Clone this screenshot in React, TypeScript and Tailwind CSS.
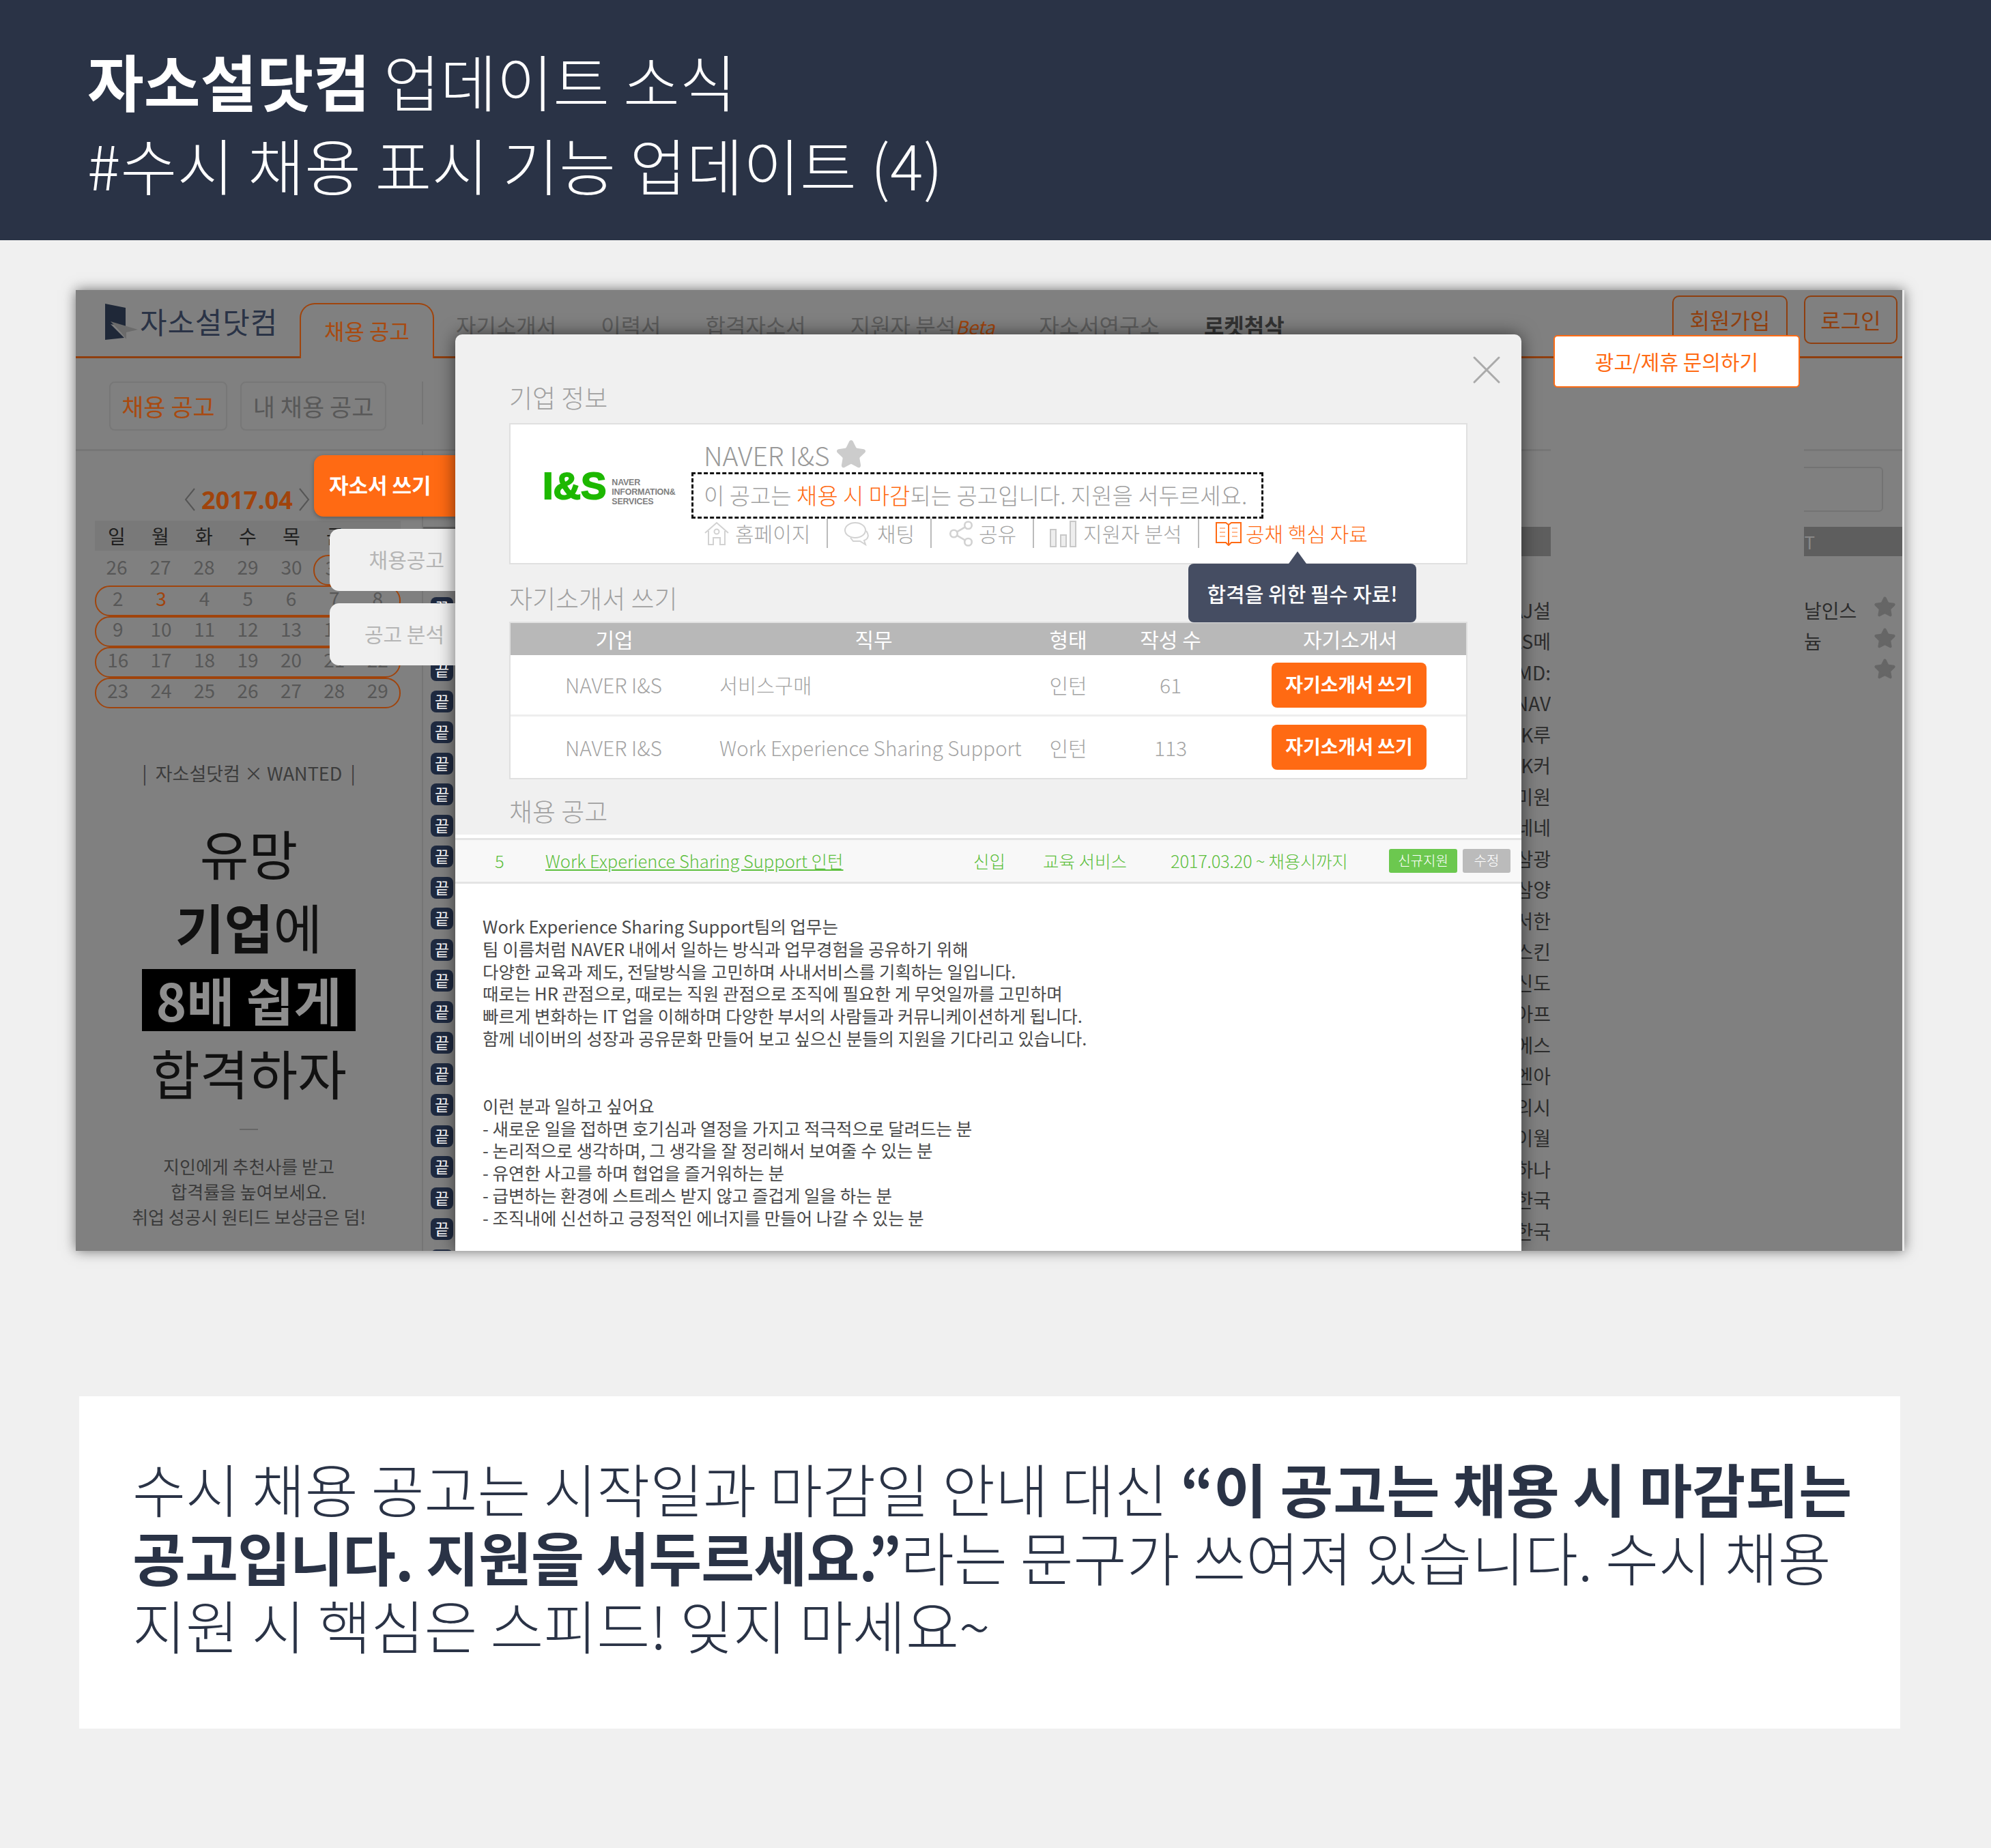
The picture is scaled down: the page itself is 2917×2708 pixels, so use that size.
import { Share2, Star, X } from 'lucide-react'

const weeks = [
  ['2', '3', '4', '5', '6', '7', '8'],
  ['9', '10', '11', '12', '13', '14', '15'],
  ['16', '17', '18', '19', '20', '21', '22'],
  ['23', '24', '25', '26', '27', '28', '29'],
]

const clipped = ['AJ설', 'LS메', 'MD:', 'NAV', 'SK루', 'SK커', '미원', '네네', '삼광', '삼양', '서한', '스킨', '신도', '아프', '에스', '엔아', '의시', '이월', '하나', '한국', '한국', '']

function Logo() {
  return (
    <svg width="50" height="56" viewBox="0 0 50 56">
      <path d="M0 0 L30 6 V34 L8 30 L28 50 L0 53 Z" fill="#1f2838" />
      <path d="M8 26 L48 38 L31 42 L31 52 L24 43 Z" fill="#6b6b6b" />
    </svg>
  )
}

function HomeIcon() {
  return (
    <svg width="38" height="36" viewBox="0 0 38 36" fill="none" stroke="#d2d2d2" strokeWidth="2">
      <path d="M2 17 L19 2 L36 17" />
      <path d="M7 14 V34 H14 V24 H24 V34 H31 V14" />
      <circle cx="19" cy="15" r="3.5" />
    </svg>
  )
}

function ChatIcon() {
  return (
    <svg width="40" height="36" viewBox="0 0 40 36" fill="none" stroke="#d2d2d2" strokeWidth="2">
      <ellipse cx="17" cy="13" rx="15" ry="11" />
      <path d="M33 14 C38 20 36 26 30 28 L32 34 L24 29 L14 29 L10 24" />
    </svg>
  )
}

function BarsIcon() {
  return (
    <svg width="40" height="40" viewBox="0 0 40 40" fill="#eeeeee" stroke="#c8c8c8" strokeWidth="2">
      <rect x="1" y="14" width="8" height="25" />
      <rect x="16" y="22" width="8" height="17" />
      <rect x="30" y="2" width="8" height="37" />
    </svg>
  )
}

function BookIcon() {
  return (
    <svg width="38" height="36" viewBox="0 0 38 36" fill="none" stroke="#ff6a13" strokeWidth="2">
      <path d="M1 2 H15 L19 5 L23 2 H37 V31 H23 L19 35 L15 31 H1 Z" />
      <path d="M19 5 V35" />
      <path d="M6 10 H14 M6 16 H14 M6 22 H14 M24 10 H32 M24 16 H32 M24 22 H32" strokeWidth="1.5" stroke="#ffa470" />
    </svg>
  )
}

function Calendar() {
  return (
    <div className="w-[448px] ml-[28px] text-[28px] text-[#575757] leading-[45px]">
      <div className="h-[102px] flex items-center justify-center gap-[9px] pt-[40px] pr-[2px]">
        <svg width="16" height="34" viewBox="0 0 16 34" fill="none" stroke="#555555" strokeWidth="2"><path d="M15 1 L2 17 L15 33" /></svg>
        <span className="text-[36px] font-bold text-[#a0440c] [font-family:'Open_Sans',sans-serif]">2017.04</span>
        <svg width="16" height="34" viewBox="0 0 16 34" fill="none" stroke="#555555" strokeWidth="2"><path d="M1 1 L14 17 L1 33" /></svg>
      </div>
      <div className="grid grid-cols-7 h-[44px] bg-[#797979] text-[#1f1f1f] text-center items-center leading-[44px]">
        {['일', '월', '화', '수', '목', '금', '토'].map((d) => (
          <span key={d}>{d}</span>
        ))}
      </div>
      <div className="grid grid-cols-7 h-[51px] items-end text-center">
        {['26', '27', '28', '29', '30'].map((d) => (
          <span key={d} className="pb-[5px]">{d}</span>
        ))}
        <div className="col-span-2 grid grid-cols-2 h-[45px] border-2 border-[#a0440c] rounded-[22px] leading-[33px]">
          <span>31</span>
          <span>1</span>
        </div>
      </div>
      {weeks.map((w) => (
        <div key={w[0]} className="grid grid-cols-7 h-[45px] text-center border-2 border-[#a0440c] rounded-[22px] leading-[33px]">
          {w.map((d) => (
            <span key={d} className={d === '3' ? 'text-[#a0440c]' : ''}>{d}</span>
          ))}
        </div>
      ))}
    </div>
  )
}

function Promo() {
  return (
    <div className="flex flex-col items-center w-[507px] text-[#111111] mt-[76px]">
      <div className="text-[27px] leading-[38px] text-[#3c3c3c] whitespace-pre">|  자소설닷컴 × WANTED  |</div>
      <div className="text-[78px] leading-[108px] mt-[43px]">유망</div>
      <div className="text-[78px] leading-[108px]"><b>기업</b>에</div>
      <div className="w-[313px] h-[91px] bg-black text-[#8e8e8e] text-[76px] font-bold leading-[88px] text-center mt-[9px] shrink-0">8배 쉽게</div>
      <div className="text-[78px] leading-[108px] mt-[6px]">합격하자</div>
      <div className="w-[27px] h-[2px] bg-[#666666] mt-[29px] shrink-0" />
      <div className="text-[26px] leading-[37px] text-[#3a3a3a] text-center mt-[34px]">
        지인에게 추천사를 받고<br />합격률을 높여보세요.<br />취업 성공시 원티드 보상금은 덤!
      </div>
    </div>
  )
}

function ListPane() {
  return (
    <div className="flex-1 min-w-0 flex flex-col border-l-2 border-[#757575]">
      <div className="h-[111px] shrink-0 flex justify-end items-center pr-[28px]">
        <div className="w-[360px] h-[66px] border-2 border-[#737373] rounded-[6px]" />
      </div>
      <div className="h-[43px] shrink-0 bg-[#5e5e5e] flex justify-end items-center pr-[128px] text-[26px] text-[#888888]">T</div>
      <div className="h-[56px] shrink-0" />
      {clipped.map((t, i) => (
        <div key={i} className="h-[45.5px] shrink-0 flex items-center text-[28px] text-[#2d2d2d]">
          <span className="ml-[11px] -mt-[5px] w-[33px] h-[32px] rounded-[8px] bg-[#1f2a40] text-white text-[23px] leading-[30px] text-center">끝</span>
          <div className="flex-1 text-right overflow-hidden whitespace-nowrap">{t}</div>
          <div className="w-[371px]" />
          <div className="w-[102px] whitespace-nowrap">{i === 0 ? '날인스' : i === 1 ? '늄' : ''}</div>
          <div className="w-[42px] -mt-[8px]">
            {i < 3 && <Star size={33} fill="#666666" stroke="#666666" />}
          </div>
        </div>
      ))}
    </div>
  )
}

function PageBehind() {
  return (
    <div className="h-full flex flex-col">
      <div className="h-[100px] shrink-0 flex border-b-[3px] border-[#8f3f0f]">
        <div className="flex items-start pt-[20px] pl-[43px] w-[328px] shrink-0">
          <Logo />
          <span className="text-[43px] text-[#2a3346] leading-[50px] ml-[1px] tracking-[0.02em] whitespace-nowrap">자소설닷컴</span>
        </div>
        <div className="w-[197px] h-[81px] mt-[19px] shrink-0 border-2 border-b-0 border-[#a0440c] rounded-t-[22px] bg-[#808080] text-center text-[32px] text-[#a84a10] leading-[76px]">
          채용 공고
        </div>
        <div className="flex items-start gap-[65px] ml-[32px] pt-[31px] text-[32px] leading-[40px] text-[#5c5c5c] whitespace-nowrap">
          <span>자기소개서</span>
          <span>이력서</span>
          <span>합격자소서</span>
          <span>지원자 분석<i className="text-[#a0440c] text-[27px]">Beta</i></span>
          <span>자소서연구소</span>
          <span className="font-bold text-[#333333]">로켓첨삭</span>
        </div>
        <div className="ml-auto flex items-start gap-[24px] pt-[8px] pr-[7px] text-[32px] text-[#8f3f0f]">
          <div className="w-[169px] h-[71px] border-2 border-[#8f3f0f] rounded-[10px] text-center leading-[66px]">회원가입</div>
          <div className="w-[137px] h-[71px] border-2 border-[#8f3f0f] rounded-[10px] text-center leading-[66px]">로그인</div>
        </div>
      </div>
      <div className="h-[136px] shrink-0 flex items-start pt-[34px] pl-[49px] gap-[19px] border-b-[3px] border-[#767676] text-[35px]">
        <div className="w-[173px] h-[72px] border-2 border-[#777777] rounded-[8px] text-center leading-[68px] text-[#a84a10]">채용 공고</div>
        <div className="w-[214px] h-[72px] border-2 border-[#777777] rounded-[8px] text-center leading-[68px] text-[#585858]">내 채용 공고</div>
        <div className="w-[2px] h-[63px] bg-[#757575] ml-[33px]" />
      </div>
      <div className="flex-1 min-h-0 flex overflow-hidden">
        <div className="w-[507px] shrink-0">
          <Calendar />
          <Promo />
        </div>
        <ListPane />
      </div>
    </div>
  )
}

function Modal() {
  return (
    <div className="absolute left-[556px] top-[65px] bottom-0 w-[1562px] bg-[#f0f0f0] rounded-t-[10px] shadow-[0_0_26px_rgba(0,0,0,0.55)] flex flex-col overflow-hidden z-20">
      <X className="absolute top-[16px] right-[15px] text-[#aaaaaa]" size={72} strokeWidth={1} />
      <div className="px-[79px] pt-[67px] text-[#a0a0a0]">
        <h3 className="text-[37px] leading-[50px] font-light">기업 정보</h3>
        <div className="h-[207px] mt-[13px] bg-white border-2 border-[#e0e0e0] flex">
          <div className="w-[265px] shrink-0 flex items-start pt-[60px] pl-[47px]">
            <span className="text-[56px] leading-[60px] font-black text-[#1db800] [font-family:'Liberation_Sans',sans-serif] [-webkit-text-stroke:2px_#1db800]">I&amp;S</span>
            <span className="ml-[8px] mt-[18px] text-[12.5px] leading-[14px] font-bold text-[#808080] whitespace-nowrap [font-family:'Liberation_Sans',sans-serif] tracking-[-0.02em]">
              NAVER<br />INFORMATION&amp;<br />SERVICES
            </span>
          </div>
          <div className="flex-1 min-w-0">
            <div className="h-[70px] flex items-end pl-[18px] text-[39px] leading-[56px] text-[#999999] font-light">
              <span className="-mb-[2px]">NAVER I&amp;S</span>
              <Star className="ml-[8px] mb-[3px]" size={46} fill="#cccccc" stroke="#cccccc" />
            </div>
            <div className="w-[838px] h-[68px] border-[3px] border-dashed border-[#111111] pl-[15px] text-[33px] leading-[60px] text-[#a0a0a0] font-light whitespace-nowrap">
              이 공고는 <span className="text-[#ff6a13]">채용 시 마감</span>되는 공고입니다. 지원을 서두르세요.
            </div>
            <div className="flex h-[43px] items-center text-[30px] text-[#a4a4a4] font-light whitespace-nowrap">
              <div className="w-[200px] flex items-center gap-[8px] pl-[18px] h-full border-r-2 border-[#bbbbbb]"><HomeIcon />홈페이지</div>
              <div className="w-[152px] flex items-center gap-[9px] pl-[23px] h-full border-r-2 border-[#bbbbbb]"><ChatIcon />채팅</div>
              <div className="w-[150px] flex items-center gap-[5px] pl-[22px] h-full border-r-2 border-[#bbbbbb]">
                <Share2 size={42} strokeWidth={1.5} className="text-[#d2d2d2]" />공유
              </div>
              <div className="w-[242px] flex items-center gap-[9px] pl-[23px] h-full border-r-2 border-[#bbbbbb]"><BarsIcon />지원자 분석</div>
              <div className="flex items-center gap-[6px] pl-[24px] text-[#ff6a13]"><BookIcon />공채 핵심 자료</div>
            </div>
          </div>
        </div>
        <h3 className="text-[37px] leading-[50px] font-light mt-[24px]">자기소개서 쓰기</h3>
        <div className="mt-[10px] border-2 border-[#e0e0e0] bg-white">
          <div className="grid grid-cols-[304px_456px_114px_186px_1fr] h-[47px] bg-[#b8b8b8] text-white text-[30px] leading-[47px] text-center font-normal">
            <span>기업</span>
            <span>직무</span>
            <span>형태</span>
            <span>작성 수</span>
            <span>자기소개서</span>
          </div>
          {[
            ['서비스구매', '61'],
            ['Work Experience Sharing Support', '113'],
          ].map(([job, n], i) => (
            <div key={n} className={`grid grid-cols-[304px_456px_114px_186px_1fr] h-[90px] items-center text-[30px] text-[#a4a4a4] font-light ${i === 0 ? 'border-b-[3px] border-[#eeeeee]' : ''}`}>
              <span className="pl-[80px] whitespace-nowrap">NAVER I&amp;S</span>
              <span className="pl-[2px] whitespace-nowrap text-[29.4px]">{job}</span>
              <span className="text-center">인턴</span>
              <span className="text-center">{n}</span>
              <div className="flex justify-center pr-[3px]">
                <div className="w-[227px] h-[66px] rounded-[8px] bg-[#ff6a13] text-white font-bold text-[28px] leading-[62px] text-center whitespace-nowrap">자기소개서 쓰기</div>
              </div>
            </div>
          ))}
        </div>
        <h3 className="text-[37px] leading-[50px] font-light mt-[21px]">채용 공고</h3>
      </div>
      <div className="mt-[10px] h-[5px] bg-white shrink-0" />
      <div className="h-[67px] shrink-0 border-y-[3px] border-[#e4e4e4] bg-[#f8f8f8] flex items-center text-[25.5px] text-[#5cbf3c] font-light whitespace-nowrap">
        <span className="w-[132px] pl-[58px]">5</span>
        <span className="w-[627px] underline">Work Experience Sharing Support 인턴</span>
        <span className="w-[102px]">신입</span>
        <span className="w-[187px]">교육 서비스</span>
        <span className="w-[320px] text-[25.5px] tracking-[-0.01em]">2017.03.20 ~ 채용시까지</span>
        <span className="w-[100px] h-[35px] rounded-[3px] bg-[#6cc84f] text-white text-[20px] leading-[33px] text-center">신규지원</span>
        <span className="ml-[8px] w-[70px] h-[35px] rounded-[3px] bg-[#bbbbbb] text-white text-[20px] leading-[33px] text-center">수정</span>
      </div>
      <div className="flex-1 bg-white px-[40px] pt-[46px] text-[25.5px] leading-[32.8px] text-[#4a4a4a] whitespace-nowrap">
        <p>Work Experience Sharing Support팀의 업무는</p>
        <p>팀 이름처럼 NAVER 내에서 일하는 방식과 업무경험을 공유하기 위해</p>
        <p>다양한 교육과 제도, 전달방식을 고민하며 사내서비스를 기획하는 일입니다.</p>
        <p>때로는 HR 관점으로, 때로는 직원 관점으로 조직에 필요한 게 무엇일까를 고민하며</p>
        <p>빠르게 변화하는 IT 업을 이해하며 다양한 부서의 사람들과 커뮤니케이션하게 됩니다.</p>
        <p>함께 네이버의 성장과 공유문화 만들어 보고 싶으신 분들의 지원을 기다리고 있습니다.</p>
        <p className="mt-[66px]">이런 분과 일하고 싶어요</p>
        <p>- 새로운 일을 접하면 호기심과 열정을 가지고 적극적으로 달려드는 분</p>
        <p>- 논리적으로 생각하며, 그 생각을 잘 정리해서 보여줄 수 있는 분</p>
        <p>- 유연한 사고를 하며 협업을 즐거워하는 분</p>
        <p>- 급변하는 환경에 스트레스 받지 않고 즐겁게 일을 하는 분</p>
        <p>- 조직내에 신선하고 긍정적인 에너지를 만들어 나갈 수 있는 분</p>
      </div>
      {/* tooltip under the 공채 핵심 자료 link */}
      <div className="absolute left-[1074px] top-[336px] w-[334px] h-[86px] rounded-[8px] bg-[#454d62] text-white text-[30px] font-medium leading-[86px] text-center whitespace-nowrap">
        <span className="absolute left-[147px] -top-[18px] w-0 h-0 border-x-[13px] border-x-transparent border-b-[18px] border-b-[#454d62]" />
        합격을 위한 필수 자료!
      </div>
    </div>
  )
}

export default function App() {
  return (
    <div className="w-[2917px] h-[2708px] bg-[#f0f0f0] overflow-hidden [font-family:'Noto_Sans_CJK_KR','Noto_Sans',sans-serif]">
      <header className="h-[352px] bg-[#2a3346] text-white pl-[128px] pt-[56px] text-[90px] leading-[123px] font-light whitespace-nowrap">
        <div><b className="font-bold">자소설닷컴</b> 업데이트 소식</div>
        <div className="tracking-[0.35px]">#수시 채용 표시 기능 업데이트 (4)</div>
      </header>

      <section className="relative mt-[73px] ml-[111px] w-[2679px] h-[1408px] bg-[#808080] border-r-[3px] border-[#ececec] shadow-[0_0_18px_rgba(0,0,0,0.55)] overflow-hidden">
        <PageBehind />

        <div className="absolute left-[2161px] top-[157px] bottom-0 w-[371px] bg-[#808080]" />

        <div className="absolute left-[349px] top-[242px] w-[220px] h-[90px] rounded-l-[14px] bg-[#ff6a13] text-white font-bold text-[31px] leading-[86px] pl-[22px] shadow-[0_2px_6px_rgba(0,0,0,0.3)] whitespace-nowrap">
          자소서 쓰기
        </div>
        <div className="absolute left-[372px] top-[350px] w-[197px] h-[91px] rounded-l-[14px] bg-[#f0f0f0] text-[#b5b5b5] text-[30px] leading-[88px] text-right pr-[29px]">
          채용공고
        </div>
        <div className="absolute left-[372px] top-[459px] w-[197px] h-[91px] rounded-l-[14px] bg-[#f0f0f0] text-[#b5b5b5] text-[30px] leading-[88px] text-right pr-[29px]">
          공고 분석
        </div>

        <Modal />

        <div className="absolute left-[2165px] top-[66px] w-[361px] h-[77px] rounded-[6px] bg-white border-2 border-[#ff6a13] text-[#ff6a13] text-[30px] leading-[72px] text-center z-30">
          광고/제휴 문의하기
        </div>
      </section>

      <div className="mt-[213px] ml-[116px] w-[2668px] h-[487px] bg-white pl-[78px] pt-[84px] text-[84.8px] leading-[100px] text-[#2a3346] font-light whitespace-nowrap">
        수시 채용 공고는 시작일과 마감일 안내 대신 <b className="font-bold">“이 공고는 채용 시 마감되는</b>
        <br />
        <b className="font-bold tracking-[-1px]">공고입니다. 지원을 서두르세요.”</b>라는 문구가 쓰여져 있습니다. 수시 채용
        <br />
        지원 시 핵심은 스피드! 잊지 마세요~
      </div>
    </div>
  )
}
